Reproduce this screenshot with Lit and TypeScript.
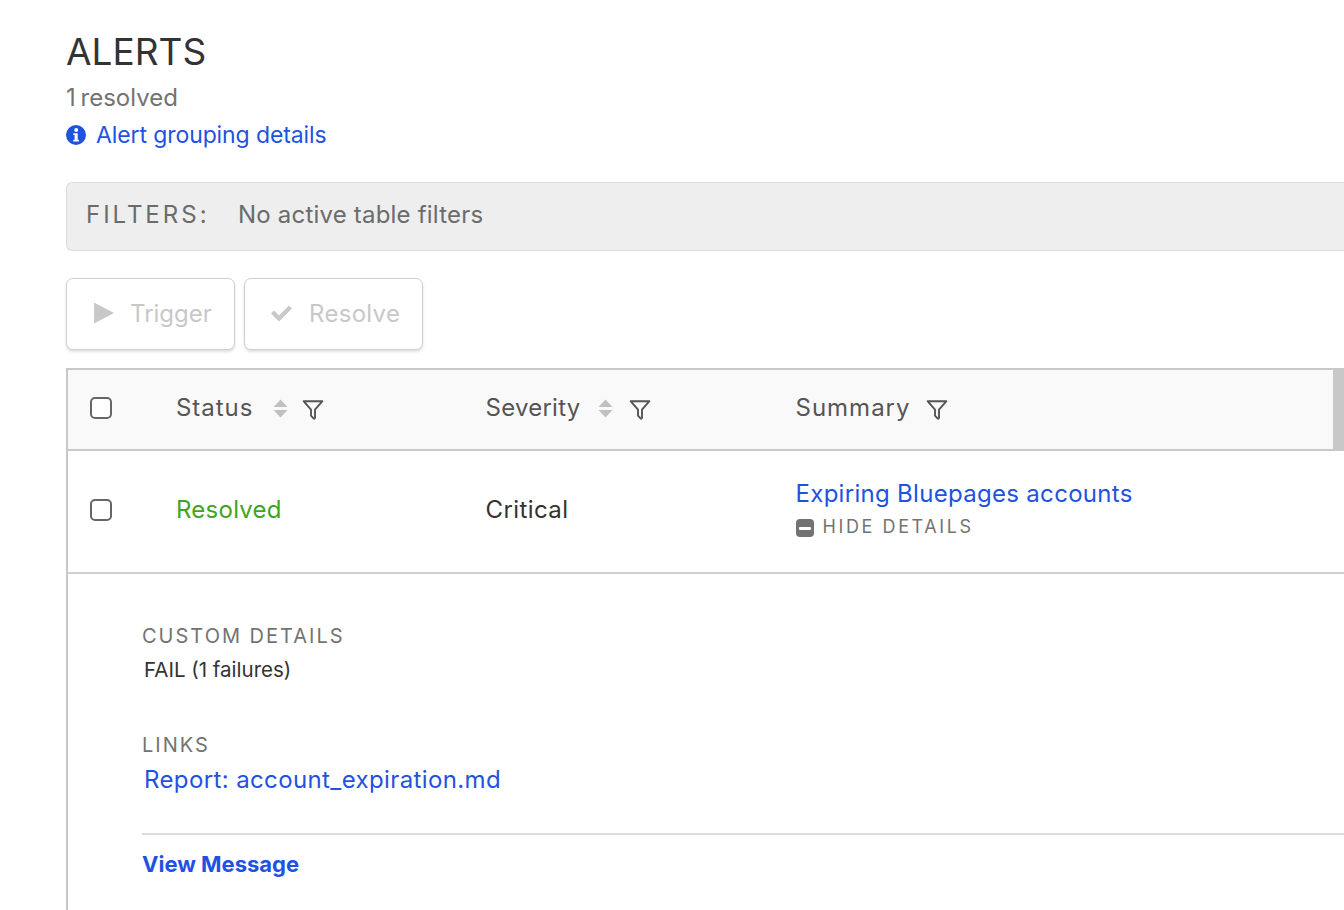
import { LitElement, html, css, svg } from "lit";
import { customElement } from "lit/decorators.js";

const funnel = svg`<svg class="funnel" width="22" height="22" viewBox="0 0 22 22"><path d="M1.6 2.2h18.8L13 10.6v8.2c0 .9-.9 1.2-1.5.6L9 16.6v-6L1.6 2.2z" fill="none" stroke="#555" stroke-width="1.9" stroke-linejoin="round"/></svg>`;
const sort = svg`<svg class="sort" width="15" height="19" viewBox="0 0 15 19"><path d="M7.5 0.5L14.5 8H.5zM7.5 18.5L.5 11h14z" fill="#c0c0c0"/></svg>`;

@customElement("app-root")
export class AppRoot extends LitElement {
  static styles = css`
    :host { display: block; height: 910px; overflow: hidden; background: #fff; font-family: Inter, "Liberation Sans", sans-serif; color: #333; font-size: 24px; }
    .page { padding: 29px 0 0 66px; box-sizing: border-box; }
    h1 { margin: 0; font-size: 37px; line-height: 46px; font-weight: 400; color: #333; }
    .count { margin-top: 7px; font-size: 24px; line-height: 32px; color: #737373; word-spacing: -2px; }
    .info { display: flex; align-items: center; gap: 10px; margin-top: 5px; line-height: 32px; height: 32px; font-size: 23px; letter-spacing: -0.1px; }
    a { color: #1f52df; text-decoration: none; }
    .filters { display: flex; align-items: center; height: 69px; box-sizing: border-box; margin-top: 31px; padding: 0 0 4px 19px; background: #eee; border: 1px solid #dcdcdc; border-right: none; border-radius: 6px 0 0 6px; color: #6b6b6b; }
    .filters b { font-weight: 400; letter-spacing: 3px; width: 152px; }
    .filters span { letter-spacing: 0.2px; }
    .btns { display: flex; gap: 9px; margin-top: 27px; }
    .btn { display: flex; align-items: center; height: 72px; box-sizing: border-box; border: 1px solid #cfcfcf; border-radius: 7px; background: #fff; box-shadow: 0 2px 3px rgba(0,0,0,.13); color: #c8c8c8; gap: 16px; padding-bottom: 2px; }
    .trigger { width: 169px; padding-left: 26px; }
    .resolve { width: 179px; padding-left: 25px; letter-spacing: 0.3px; }
    .table { margin-top: 18px; border-left: 2px solid #c8c8c8; min-height: 700px; }
    .row { display: grid; grid-template-columns: 108px 309.5px 310px 1fr; align-items: center; }
    .head { height: 83px; box-sizing: border-box; padding-bottom: 3px; background: #f9f9f9; border-top: 2px solid #c8c8c8; border-bottom: 2px solid #c8c8c8; border-right: 11px solid #c8c8c8; color: #555; }
    .body { height: 123px; box-sizing: border-box; padding-bottom: 5px; border-bottom: 2px solid #cfcfcf; }
    .box { width: 22px; height: 22px; margin-left: 22px; box-sizing: border-box; border: 2px solid #666; border-radius: 5px; background: #fff; }
    .body .box { margin-top: 2px; }
    .th { display: flex; align-items: center; }
    .th > span { margin-bottom: 2px; }
    .sort { margin-left: 19px; }
    .funnel { margin-left: 14px; margin-top: 3px; }
    .status { letter-spacing: 0.95px; }
    .severity { letter-spacing: 0.25px; }
    .summary { letter-spacing: 1px; }
    .th:not(.sev) .sort { margin-left: 20px; }
    .sev .sort { margin-left: 18px; }
    .sev .funnel { margin-left: 16px; }
    .sum .funnel { margin-left: 15px; }
    .resolved { color: #3fa423; letter-spacing: 0.25px; }
    .critical { letter-spacing: 0.4px; }
    .summary-cell { margin-top: -2px; }
    .toggle { display: flex; align-items: center; gap: 9px; margin-top: 5px; font-size: 18px; line-height: 24px; letter-spacing: 2.6px; color: #737373; }
    .minus { width: 18px; height: 18px; border-radius: 4px; background: #737373; display: flex; align-items: center; justify-content: center; margin-top: 3px; }
    .minus i { display: block; width: 12px; height: 3px; background: #fff; border-radius: 1px; }
    .title { display: block; line-height: 32px; letter-spacing: 0.3px; }
    .details { padding: 49px 0 0 74px; }
    .label { font-size: 20px; line-height: 26px; letter-spacing: 2px; color: #737373; }
    .value { margin: 7px 0 0 2px; font-size: 20.5px; line-height: 28px; color: #333; }
    .links { margin-top: 48px; }
    .link { display: block; margin: 6px 0 0 2px; line-height: 32px; letter-spacing: 0.38px; }
    hr { margin: 37px 0 0 0; border: none; height: 2px; background: #dcdcdc; }
    .view { display: block; margin-top: 14px; font-weight: 700; font-size: 22px; line-height: 30px; }
  `;

  render() {
    return html`<div class="page">
      <h1>ALERTS</h1>
      <div class="count">1 resolved</div>
      <div class="info">
        <svg width="20" height="20" viewBox="0 0 20 20"><circle cx="10" cy="10" r="10" fill="#1f52df"/><circle cx="10.2" cy="4.9" r="2" fill="#fff"/><path d="M7.3 8.2h4.4v6.6h1.2v1.7H7.3v-1.7h1.3v-4.9H7.3z" fill="#fff"/></svg>
        <a href="#">Alert grouping details</a>
      </div>
      <div class="filters"><b>FILTERS:</b><span>No active table filters</span></div>
      <div class="btns">
        <div class="btn trigger"><svg width="21" height="22" viewBox="0 0 21 22"><path d="M1 .5L21 11 1 21.5z" fill="#c8c8c8"/></svg>Trigger</div>
        <div class="btn resolve"><svg width="23" height="18" viewBox="0 0 23 18"><path d="M1 9.5L4 6.5l5 5L19 1.5l3 3L9 17.5z" fill="#c8c8c8"/></svg>Resolve</div>
      </div>
      <div class="table">
        <div class="row head">
          <div class="box"></div>
          <div class="th"><span class="status">Status</span>${sort}${funnel}</div>
          <div class="th sev"><span class="severity">Severity</span>${sort}${funnel}</div>
          <div class="th sum"><span class="summary">Summary</span>${funnel}</div>
        </div>
        <div class="row body">
          <div class="box"></div>
          <div class="resolved">Resolved</div>
          <div class="critical">Critical</div>
          <div class="summary-cell">
            <a class="title" href="#">Expiring Bluepages accounts</a>
            <div class="toggle"><span class="minus"><i></i></span>HIDE DETAILS</div>
          </div>
        </div>
        <div class="details">
          <div class="label">CUSTOM DETAILS</div>
          <div class="value">FAIL (1 failures)</div>
          <div class="links label">LINKS</div>
          <a class="link" href="#">Report: account_expiration.md</a>
          <hr />
          <a class="view" href="#">View Message</a>
        </div>
      </div>
    </div>`;
  }
}
